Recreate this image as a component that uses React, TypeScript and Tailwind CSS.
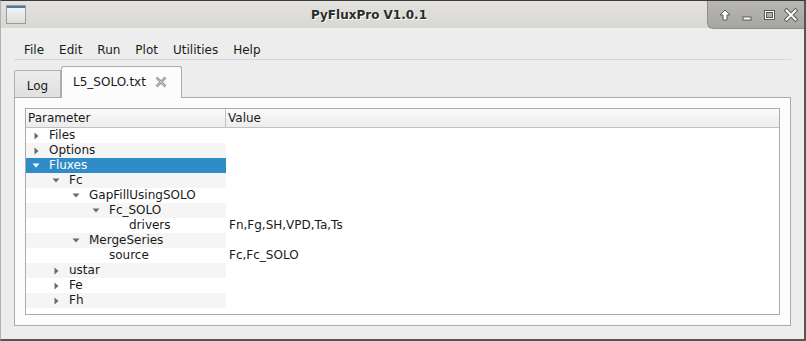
import React from "react";

const font = { fontFamily: '"DejaVu Sans", "Liberation Sans", sans-serif' };

type Row = { label: string; level: number; arrow?: "right" | "down"; value?: string; selected?: boolean };

const rows: Row[] = [
  { label: "Files", level: 0, arrow: "right" },
  { label: "Options", level: 0, arrow: "right" },
  { label: "Fluxes", level: 0, arrow: "down", selected: true },
  { label: "Fc", level: 1, arrow: "down" },
  { label: "GapFillUsingSOLO", level: 2, arrow: "down" },
  { label: "Fc_SOLO", level: 3, arrow: "down" },
  { label: "drivers", level: 4, value: "Fn,Fg,SH,VPD,Ta,Ts" },
  { label: "MergeSeries", level: 2, arrow: "down" },
  { label: "source", level: 3, value: "Fc,Fc_SOLO" },
  { label: "ustar", level: 1, arrow: "right" },
  { label: "Fe", level: 1, arrow: "right" },
  { label: "Fh", level: 1, arrow: "right" },
];

function Arrow({ dir, selected }: { dir: "right" | "down"; selected?: boolean }) {
  const c = selected ? "#ffffff" : "#6a6a6a";
  if (dir === "right")
    return (
      <svg width="5" height="8" viewBox="0 0 5 8">
        <path d="M0.5 0.5 L4.5 4 L0.5 7.5 Z" fill={c} />
      </svg>
    );
  return (
    <svg width="8" height="5" viewBox="0 0 8 5">
      <path d="M0.5 0.5 L7.5 0.5 L4 4.5 Z" fill={c} />
    </svg>
  );
}

function TitleButtons() {
  const stroke = "#5a5a5a";
  return (
    <div className="flex h-[28px] w-[97px] items-center gap-[8px] rounded-bl-[6px] bg-gradient-to-b from-[#b7b6b2] to-[#a7a6a2] pl-[10px] border-l border-b border-[#8f8e8a]">
      <svg width="14" height="14" viewBox="0 0 14 14">
        <path d="M7 2 L12 7 L9 7 L9 12 L5 12 L5 7 L2 7 Z" fill="#ffffff" stroke={stroke} strokeWidth="1" />
      </svg>
      <svg width="14" height="14" viewBox="0 0 14 14">
        <rect x="3" y="9" width="8" height="3" fill="#ffffff" stroke={stroke} strokeWidth="1" />
      </svg>
      <svg width="14" height="14" viewBox="0 0 14 14">
        <rect x="2.5" y="2.5" width="10" height="9" fill="none" stroke={stroke} strokeWidth="1" />
        <rect x="3.5" y="3.5" width="8" height="7" fill="none" stroke="#ffffff" strokeWidth="1" />
        <rect x="4.5" y="4.5" width="6" height="5" fill="none" stroke={stroke} strokeWidth="1" />
      </svg>
      <svg width="14" height="14" viewBox="0 0 14 14">
        <path d="M2.5 2.5 L11.5 11.5 M11.5 2.5 L2.5 11.5" stroke={stroke} strokeWidth="4" strokeLinecap="square" />
        <path d="M2.5 2.5 L11.5 11.5 M11.5 2.5 L2.5 11.5" stroke="#ffffff" strokeWidth="2" strokeLinecap="square" />
      </svg>
    </div>
  );
}

export default function App() {
  return (
    <div
      className="relative flex h-[341px] w-[806px] flex-col overflow-hidden border-r-2 border-b-2 border-t border-l border-t-[#3a3a3a] border-l-[#b0b0ae] border-r-[#555555] border-b-[#555555] bg-[#ededed] text-[12px] text-[#1a1a1a]"
      style={font}
    >
      {/* title bar */}
      <div className="flex h-[27px] items-start bg-gradient-to-b from-[#e3e2de] to-[#d8d7d3]">
        <div className="flex h-[27px] w-[30px] items-center pl-[5px]">
          <div className="h-[19px] w-[20px] border border-[#9a9a9a] bg-gradient-to-b from-[#f6f6f6] to-[#dedede]">
            <div className="h-[2px] w-full bg-[#4b79b8]" />
          </div>
        </div>
        <div className="flex h-[27px] flex-1 items-center justify-center">
          <span
            className="text-[12px] font-bold text-[#2b2b2b]"
            style={{ textShadow: "1px 1px 0 #ffffff" }}
          >
            PyFluxPro V1.0.1
          </span>
        </div>
        <TitleButtons />
      </div>

      {/* body */}
      <div className="flex flex-1 flex-col px-[13px] pb-[13px]">
        {/* menu bar */}
        <div className="flex h-[32px] items-center border-b border-[#d6d6d6] pl-[2.5px] pt-[12px]">
          {["File", "Edit", "Run", "Plot", "Utilities", "Help"].map((m) => (
            <span key={m} className="px-[7.5px] leading-[20px]">
              {m}
            </span>
          ))}
        </div>

        {/* tabs */}
        <div className="mt-[6px] flex h-[31px] items-end">
          <div className="flex h-[27px] w-[47px] items-center justify-center rounded-tl-[2px] border border-b-0 border-[#b0b0b0] bg-gradient-to-b from-[#ececec] to-[#e0e0e0] pt-[3px]">
            Log
          </div>
          <div className="relative z-10 -mb-[1px] flex h-[32px] w-[121px] items-center gap-[9px] rounded-t-[3px] border border-b-0 border-[#aaaaaa] bg-[#fcfcfc] pb-[2px] pl-[11px]">
            <span>L5_SOLO.txt</span>
            <svg width="12" height="12" viewBox="0 0 12 12">
              <path d="M1.5 1.5 L10.5 10.5 M10.5 1.5 L1.5 10.5" stroke="#9c9c9c" strokeWidth="2.6" />
              <path d="M1.5 1.5 L10.5 10.5 M10.5 1.5 L1.5 10.5" stroke="#cfcfcf" strokeWidth="0.8" />
            </svg>
          </div>
        </div>

        {/* tab pane */}
        <div className="flex flex-1 flex-col border border-[#aaaaaa] bg-[#fcfcfc] p-[10px]">
          <div className="flex flex-1 flex-col border border-[#aaaaaa] bg-white">
            {/* header */}
            <div className="flex h-[19px] border-b border-[#c2c2c2] bg-gradient-to-b from-[#fbfbfb] to-[#ececec]">
              <div className="flex w-[200px] items-center border-r border-[#c2c2c2] pl-[2px]">Parameter</div>
              <div className="flex items-center pl-[2px]">Value</div>
            </div>
            {rows.map((r, i) => (
              <div key={r.label} className="flex h-[15px]">
                <div
                  className={
                    "flex w-[200px] items-center " +
                    (r.selected ? "bg-[#308cc6] text-white" : i % 2 === 1 ? "bg-[#f5f5f5]" : "bg-white")
                  }
                  style={{ paddingLeft: r.level * 20 }}
                >
                  <div className="flex w-[23px] items-center justify-center pr-[3px]">
                    {r.arrow ? <Arrow dir={r.arrow} selected={r.selected} /> : null}
                  </div>
                  <span className="leading-[15px]">{r.label}</span>
                </div>
                <div className="flex items-center pl-[3px] leading-[15px]">{r.value ?? ""}</div>
              </div>
            ))}
          </div>
        </div>
      </div>
    </div>
  );
}
